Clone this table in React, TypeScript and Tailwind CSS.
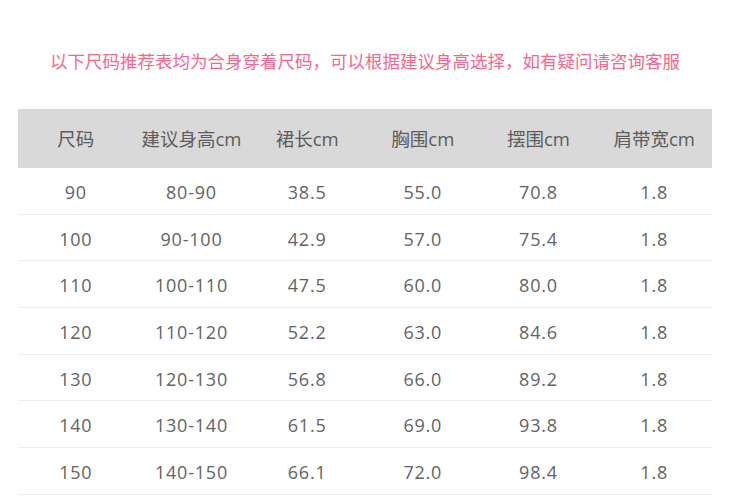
import React from "react";

const headers = ["尺码", "建议身高cm", "裙长cm", "胸围cm", "摆围cm", "肩带宽cm"];
const rows = [
  ["90", "80-90", "38.5", "55.0", "70.8", "1.8"],
  ["100", "90-100", "42.9", "57.0", "75.4", "1.8"],
  ["110", "100-110", "47.5", "60.0", "80.0", "1.8"],
  ["120", "110-120", "52.2", "63.0", "84.6", "1.8"],
  ["130", "120-130", "56.8", "66.0", "89.2", "1.8"],
  ["140", "130-140", "61.5", "69.0", "93.8", "1.8"],
  ["150", "140-150", "66.1", "72.0", "98.4", "1.8"],
];

export default function App() {
  return (
    <div
      className="w-[730px] h-[496px] bg-white overflow-hidden"
      style={{ fontFamily: '"Open Sans", "Noto Sans CJK SC", sans-serif' }}
    >
      <div className="pt-[48px] h-[109px] text-center text-[17.5px] leading-[26px] text-[#f7678c]">
        以下尺码推荐表均为合身穿着尺码，可以根据建议身高选择，如有疑问请咨询客服
      </div>
      <div className="mx-[18px] w-[694px]">
        <div className="grid grid-cols-6 h-[59px] items-center bg-[#d9d9d9] text-[18.5px] text-[#5c5c5c]">
          {headers.map((h) => (
            <div key={h} className="text-center">
              {h}
            </div>
          ))}
        </div>
        {rows.map((r, i) => (
          <div
            key={i}
            className="grid grid-cols-6 h-[46.7px] pt-[3px] items-center border-b border-[#eeeeee] text-[18px] tracking-[0.8px] text-[#636363]"
          >
            {r.map((c, j) => (
              <div key={j} className="text-center">
                {c}
              </div>
            ))}
          </div>
        ))}
      </div>
    </div>
  );
}
